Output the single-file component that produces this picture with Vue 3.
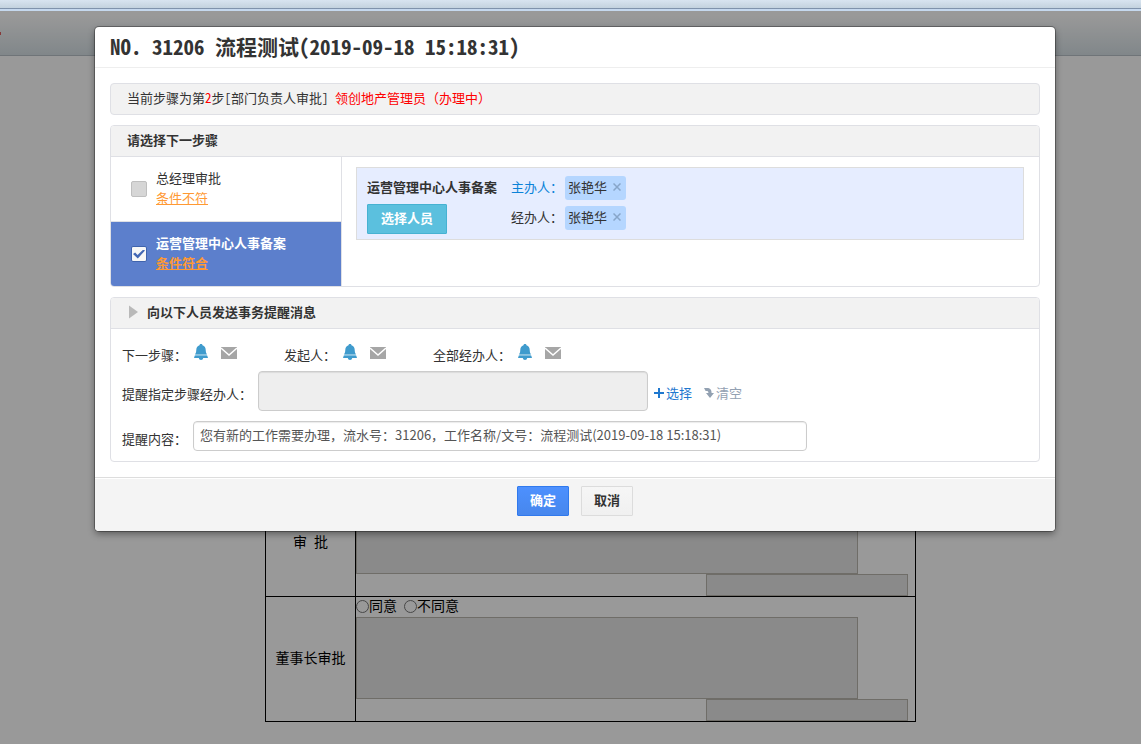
<script setup>
import { ref } from 'vue'

const steps = ref([
  { id: 'gm', name: '总经理审批', hint: '条件不符', checked: false, disabled: true },
  { id: 'hr', name: '运营管理中心人事备案', hint: '条件符合', checked: true, disabled: false },
])
const handlers = [
  { role: '主办人：', person: '张艳华', lead: true },
  { role: '经办人：', person: '张艳华', lead: false },
]
const notices = ['下一步骤：', '发起人：', '全部经办人：']
const approvals = [
  { id: 'zjl', lines: ['总经理', '审 批'] },
  { id: 'dsz', lines: ['董事长审批'] },
]
const message = ref('您有新的工作需要办理，流水号：31206，工作名称/文号：流程测试(2019-09-18 15:18:31)')
</script>

<template>
  <div class="screen">
    <div class="page">
      <div class="strip"></div>
      <header class="toolbar"><i class="mark"></i></header>
      <main class="form-area">
        <table class="form">
          <tbody>
            <tr v-for="a in approvals" :key="a.id">
              <th scope="row"><span v-for="l in a.lines" :key="l">{{ l }}</span></th>
              <td>
                <div class="opinions">
                  <label><input type="radio" :name="a.id" />同意</label>
                  <label><input type="radio" :name="a.id" />不同意</label>
                </div>
                <textarea class="comment" readonly :aria-label="a.lines.join('')"></textarea>
                <input class="sign" type="text" readonly :aria-label="a.lines.join('')" />
              </td>
            </tr>
          </tbody>
        </table>
      </main>
    </div>
    <div class="backdrop"></div>

    <div class="overlay">
      <section class="dialog" role="dialog" aria-labelledby="dlg-title">
        <h1 id="dlg-title">NO. 31206 流程测试(2019-09-18 15:18:31)</h1>
        <div class="body">
          <p class="current">当前步骤为第<em>2</em>步[部门负责人审批] <em class="who">领创地产管理员（办理中）</em></p>

          <section class="panel">
            <h2>请选择下一步骤</h2>
            <div class="split">
              <ul class="steps">
                <li v-for="s in steps" :key="s.id" :class="{ active: s.checked }">
                  <input :id="s.id" v-model="s.checked" type="checkbox" :disabled="s.disabled" />
                  <div class="step-text">
                    <label :for="s.id">{{ s.name }}</label>
                    <a href="#">{{ s.hint }}</a>
                  </div>
                </li>
              </ul>
              <div class="assign">
                <div class="assign-name">
                  <strong>运营管理中心人事备案</strong>
                  <button type="button" class="pick">选择人员</button>
                </div>
                <div class="assign-people">
                  <div v-for="h in handlers" :key="h.role" class="person-row">
                    <a v-if="h.lead" href="#" class="role lead">{{ h.role }}</a>
                    <span v-else class="role">{{ h.role }}</span>
                    <span class="tag">{{ h.person }}
                      <button type="button" aria-label="移除">
                        <svg width="8" height="8" viewBox="0 0 8 8"><path d="M0.5 0.5L7.5 7.5M7.5 0.5L0.5 7.5" stroke="#87a5c9" stroke-width="1.5" /></svg>
                      </button>
                    </span>
                  </div>
                </div>
              </div>
            </div>
          </section>

          <section class="panel">
            <h2 class="fold">
              <svg width="9" height="14" viewBox="0 0 9 14"><path d="M0 0.5L9 7L0 13.5Z" fill="#b9b9b9" /></svg>
              向以下人员发送事务提醒消息
            </h2>
            <div class="remind">
              <div class="notices">
                <div v-for="n in notices" :key="n" class="notice">
                  <span>{{ n }}</span>
                  <button type="button" aria-label="事务提醒">
                    <svg width="14" height="16" viewBox="0 0 14 16">
                      <path d="M7 0C7.9 0 8.4 0.5 8.5 1.2C10.7 2 11.6 3.6 11.7 5.8C11.8 8.2 12.1 9.2 12.8 10H1.2C1.9 9.2 2.2 8.2 2.3 5.8C2.4 3.6 3.3 2 5.5 1.2C5.6 0.5 6.1 0 7 0Z" fill="#3f9bcd" />
                      <path d="M1.2 10H12.8V11.4H1.2Z" fill="#8cc3e0" />
                      <path d="M0.8 11.4H13.2L14 14H0Z" fill="#3f9bcd" />
                      <path d="M4.8 14H9.2C9 15.3 8.2 16 7 16C5.8 16 5 15.3 4.8 14Z" fill="#3f9bcd" />
                    </svg>
                  </button>
                  <button type="button" aria-label="邮件">
                    <svg width="16" height="16" viewBox="0 0 16 16">
                      <path d="M0 3H16V15H0Z" fill="#a6a6a6" />
                      <path d="M0 4L8 11L16 4" fill="none" stroke="#fff" stroke-width="1.4" />
                    </svg>
                  </button>
                </div>
              </div>
              <div class="field">
                <label for="who">提醒指定步骤经办人：</label>
                <textarea id="who" readonly></textarea>
                <a href="#" class="add">
                  <svg width="12" height="12" viewBox="0 0 12 12"><path d="M6 1V11M1 6H11" stroke="#1f78cf" stroke-width="2" /></svg>选择
                </a>
                <a href="#" class="clear">
                  <svg width="12" height="12" viewBox="0 0 12 12"><path d="M1 1H4C7.2 1 8.6 2.5 8.6 6H11L7 11L3 6H5.4C5.4 4.4 4.8 4 3.6 4H2.6Z" fill="#93a1b2" /></svg>清空
                </a>
              </div>
              <div class="field">
                <label for="msg">提醒内容：</label>
                <input id="msg" v-model="message" type="text" />
              </div>
            </div>
          </section>
        </div>
        <footer class="actions">
          <button type="button" class="ok">确定</button>
          <button type="button" class="cancel">取消</button>
        </footer>
      </section>
    </div>
  </div>
</template>

<style>
body {
  margin: 0;
  background: #fff;
}
</style>

<style scoped>
* {
  box-sizing: border-box;
}
.screen {
  position: relative;
  min-height: 100vh;
  overflow: hidden;
  font: 13px/20px "Noto Sans CJK SC", sans-serif;
  font-feature-settings: "hwid";
  color: #333;
}
button,
input,
textarea {
  font: inherit;
  font-feature-settings: inherit;
  color: inherit;
  margin: 0;
  padding: 0;
  border: 0;
  border-radius: 0;
  background: none;
}
button {
  cursor: pointer;
}
textarea {
  display: block;
  resize: none;
}
a {
  text-decoration: none;
}
svg {
  display: block;
}
.strip {
  height: 11px;
  background: linear-gradient(#d8e4f0, #c3d2de 8px, #7b8fa9 8px, #8396ae 9px, #c5d8ee 9px, #c5d8ee);
}
.toolbar {
  display: flex;
  align-items: center;
  height: 45px;
  border-bottom: 1px solid #b9c2c9;
  background: linear-gradient(#fff 10%, #d7e1e6);
}
.mark {
  width: 1px;
  height: 3px;
  background: #e06060;
}
.form-area {
  padding: 415px 0 22px 40px;
}
.form {
  width: 651px;
  margin: 0 auto;
  border-collapse: collapse;
  font-size: 14px;
  color: #000;
}
.form th,
.form td {
  padding: 0;
  border: 1px solid #000;
}
.form th {
  width: 90px;
  padding-bottom: 4px;
  font-weight: normal;
  line-height: 18px;
}
.form th span {
  display: block;
}
.opinions {
  display: flex;
  gap: 7px;
  height: 20px;
  line-height: 16px;
}
.opinions label {
  display: flex;
  align-items: flex-start;
}
.opinions input {
  appearance: none;
  width: 13px;
  height: 13px;
  margin-top: 3px;
  border: 1px solid #777;
  border-radius: 50%;
}
.comment {
  width: 502px;
  height: 82px;
  border: 1px solid #bab6ae;
  background: #e6e6e6;
}
.sign {
  display: block;
  width: 202px;
  height: 22px;
  margin: 0 7px 0 auto;
  border: 1px solid #bab6ae;
  background: #e6e6e6;
}
.backdrop {
  position: absolute;
  inset: 11px 0 0;
  background: rgba(0, 0, 0, 0.4);
}
.overlay {
  position: absolute;
  inset: 0 0 auto;
  padding: 27px 86px 0 95px;
}
.dialog {
  border-radius: 4px;
  background: #fff;
  box-shadow: 0 0 0 1px rgba(0, 0, 0, 0.3), 0 3px 7px rgba(0, 0, 0, 0.4);
}
h1 {
  margin: 0;
  padding: 0 15px 2px;
  border-bottom: 1px solid #eee;
  font-size: 21px;
  line-height: 38px;
}
.body {
  display: flex;
  flex-direction: column;
  gap: 10px;
  padding: 15px;
}
.current {
  margin: 0;
  padding: 0 16px 2px;
  border: 1px solid #dfe0e5;
  border-radius: 4px;
  background: #f2f2f2;
  line-height: 28px;
}
em {
  font-style: normal;
  color: #f00;
}
.who {
  font-feature-settings: normal;
}
.panel {
  border: 1px solid #dfe0e5;
  border-radius: 4px;
  overflow: hidden;
}
h2 {
  display: flex;
  align-items: center;
  gap: 9px;
  margin: 0;
  padding: 0 16px 2px;
  border-bottom: 1px solid #dfe0e5;
  background: #f2f2f2;
  font-size: 13px;
  line-height: 28px;
}
.fold {
  padding-left: 18px;
}
.split {
  display: flex;
}
.steps {
  width: 231px;
  margin: 0;
  padding: 0;
  border-right: 1px solid #dfe0e5;
  list-style: none;
}
.steps li {
  display: flex;
  align-items: center;
  gap: 9px;
  height: 64px;
  padding-left: 20px;
}
.steps li + li {
  height: 65px;
  border-top: 1px solid #dfe0e5;
}
.steps li.active {
  background: #5c7fcc;
  color: #fff;
  font-weight: bold;
}
.steps input {
  appearance: none;
  width: 16px;
  height: 16px;
  border: 1px solid #bfbfbf;
  border-radius: 2px;
  background: #d6d6d6;
}
.steps input:checked {
  display: grid;
  place-items: center;
  border-color: #3f63ad;
  background: #f7f7f7;
}
.steps input:checked::before {
  content: "";
  width: 12px;
  height: 9px;
  background: #4468b4;
  clip-path: polygon(0 50%, 18% 34%, 38% 62%, 86% 0, 100% 12%, 40% 100%);
}
.step-text {
  display: flex;
  flex-direction: column;
  align-items: flex-start;
  padding-bottom: 3px;
}
.step-text a {
  color: #f93;
  text-decoration: underline;
}
.assign {
  flex: 1;
  display: flex;
  gap: 14px;
  align-self: flex-start;
  margin: 10px 15px 0 14px;
  padding: 5px 10px;
  border: 1px solid #ddd;
  background: #e6edff;
}
.assign-name {
  display: flex;
  flex-direction: column;
  align-items: flex-start;
  gap: 3px;
  line-height: 28px;
}
.pick {
  height: 30px;
  padding: 0 13px 2px;
  border: 1px solid #46b2d2;
  border-radius: 1px;
  background: #5bc0de;
  color: #fff;
  font-weight: bold;
  line-height: 26px;
}
.person-row {
  display: flex;
  align-items: center;
  gap: 2px;
  height: 30px;
}
.role {
  padding-bottom: 2px;
}
.lead {
  color: #0b82d8;
}
.tag {
  display: flex;
  align-items: center;
  gap: 6px;
  height: 24px;
  padding: 0 5px 2px 3px;
  border-radius: 3px;
  background: #b5d6ff;
}
.remind {
  padding: 15px 11px 10px;
}
.notices {
  display: flex;
  gap: 47px;
  line-height: 22px;
}
.notice {
  display: flex;
  align-items: flex-start;
  gap: 13px;
}
.notice span {
  margin-right: -6px;
}
.field {
  display: flex;
  align-items: center;
  margin-top: 5px;
}
.field + .field {
  margin-top: 10px;
}
.field label {
  padding-top: 5px;
  margin-right: 6px;
}
.field textarea,
.field input {
  border: 1px solid #ccc;
  border-radius: 4px;
  box-shadow: inset 0 1px 1px rgba(0, 0, 0, 0.08);
}
.field textarea {
  width: 390px;
  height: 40px;
  background: #eee;
}
.field input {
  width: 614px;
  height: 30px;
  padding: 0 6px 3px;
  color: #555;
  font-feature-settings: normal;
}
.field a {
  display: flex;
  align-items: center;
  gap: 1px;
  margin-left: 5px;
  padding-top: 4px;
}
.add {
  color: #1f78cf;
}
.field .clear {
  margin-left: 11px;
  color: #93a1b2;
}
.actions {
  display: flex;
  justify-content: center;
  gap: 12px;
  padding: 8px 15px 15px;
  border-top: 1px solid #ddd;
  border-radius: 0 0 4px 4px;
  background: #f4f4f4;
  box-shadow: inset 0 1px 0 #fff;
}
.actions button {
  height: 30px;
  padding: 0 12px 2px;
  border: 1px solid #dcdcdc;
  border-radius: 1px;
  background: linear-gradient(#f6f6f6, #f0f0f0);
  font-weight: bold;
  line-height: 26px;
}
.actions .ok {
  border-color: #3079ed;
  background: linear-gradient(#4d90fe, #4787ed);
  color: #fff;
}
</style>
